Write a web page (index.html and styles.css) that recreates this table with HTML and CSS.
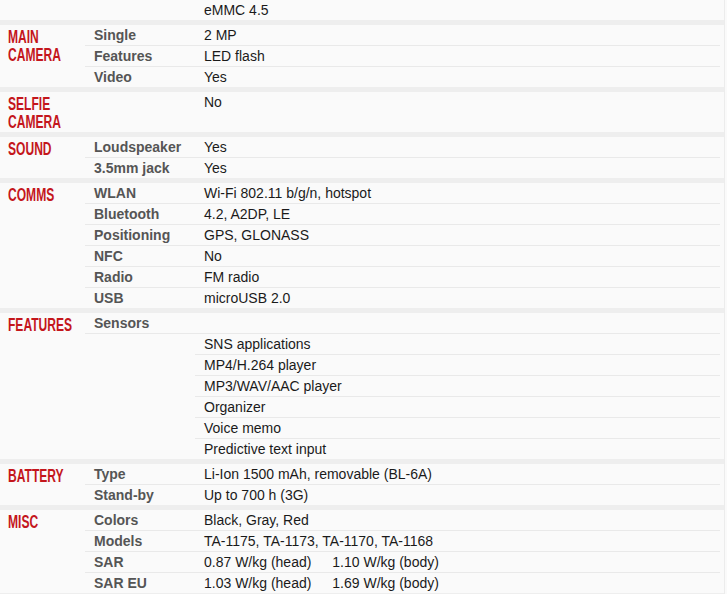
FILE: index.html
```html
<!DOCTYPE html>
<html>
<head>
<meta charset="utf-8">
<link rel="stylesheet" href="styles.css">
</head>
<body>
<div class="page">
  <div class="section">
    <div class="title"></div>
    <div class="rows">
      <div class="row"><div class="name blank"></div><div class="val">eMMC 4.5</div></div>
    </div>
  </div>

  <div class="section">
    <div class="title"><span>MAIN<br>CAMERA</span></div>
    <div class="rows">
      <div class="row"><div class="name">Single</div><div class="val">2 MP</div></div>
      <div class="row"><div class="name">Features</div><div class="val">LED flash</div></div>
      <div class="row"><div class="name">Video</div><div class="val">Yes</div></div>
    </div>
  </div>

  <div class="section">
    <div class="title"><span>SELFIE<br>CAMERA</span></div>
    <div class="rows">
      <div class="row"><div class="name blank"></div><div class="val">No</div></div>
    </div>
  </div>

  <div class="section">
    <div class="title"><span>SOUND</span></div>
    <div class="rows">
      <div class="row"><div class="name">Loudspeaker</div><div class="val">Yes</div></div>
      <div class="row"><div class="name">3.5mm jack</div><div class="val">Yes</div></div>
    </div>
  </div>

  <div class="section">
    <div class="title"><span>COMMS</span></div>
    <div class="rows">
      <div class="row"><div class="name">WLAN</div><div class="val">Wi-Fi 802.11 b/g/n, hotspot</div></div>
      <div class="row"><div class="name">Bluetooth</div><div class="val">4.2, A2DP, LE</div></div>
      <div class="row"><div class="name">Positioning</div><div class="val">GPS, GLONASS</div></div>
      <div class="row"><div class="name">NFC</div><div class="val">No</div></div>
      <div class="row"><div class="name">Radio</div><div class="val">FM radio</div></div>
      <div class="row"><div class="name">USB</div><div class="val">microUSB 2.0</div></div>
    </div>
  </div>

  <div class="section">
    <div class="title"><span>FEATURES</span></div>
    <div class="rows">
      <div class="row"><div class="name">Sensors</div><div class="val"></div></div>
      <div class="row"><div class="name blank"></div><div class="val">SNS applications</div></div>
      <div class="row"><div class="name blank"></div><div class="val">MP4/H.264 player</div></div>
      <div class="row"><div class="name blank"></div><div class="val">MP3/WAV/AAC player</div></div>
      <div class="row"><div class="name blank"></div><div class="val">Organizer</div></div>
      <div class="row"><div class="name blank"></div><div class="val">Voice memo</div></div>
      <div class="row"><div class="name blank"></div><div class="val">Predictive text input</div></div>
    </div>
  </div>

  <div class="section">
    <div class="title"><span>BATTERY</span></div>
    <div class="rows">
      <div class="row"><div class="name">Type</div><div class="val">Li-Ion 1500 mAh, removable (BL-6A)</div></div>
      <div class="row"><div class="name">Stand-by</div><div class="val">Up to 700 h (3G)</div></div>
    </div>
  </div>

  <div class="section">
    <div class="title"><span>MISC</span></div>
    <div class="rows">
      <div class="row"><div class="name">Colors</div><div class="val">Black, Gray, Red</div></div>
      <div class="row"><div class="name">Models</div><div class="val">TA-1175, TA-1173, TA-1170, TA-1168</div></div>
      <div class="row"><div class="name">SAR</div><div class="val">0.87 W/kg (head) <span class="gap"></span>1.10 W/kg (body)</div></div>
      <div class="row"><div class="name">SAR EU</div><div class="val">1.03 W/kg (head) <span class="gap"></span>1.69 W/kg (body)</div></div>
    </div>
  </div>
</div>
</body>
</html>
```

FILE: styles.css
```css
html, body {
  margin: 0;
  padding: 0;
  background: #fafafa;
}

.page {
  width: 724px;
  border-right: 1px solid #ececec;
  font-family: "Liberation Sans", Arial, sans-serif;
  font-size: 14px;
}

.section {
  display: flex;
  border-bottom: 5px solid #eeeeee;
}

.title {
  width: 77px;
  flex: 0 0 77px;
  padding: 3px 0 1px 8px;
  white-space: nowrap;
}

.title span {
  display: inline-block;
  font-size: 18px;
  line-height: 18px;
  font-weight: bold;
  color: #c4161c;
  transform: scaleX(0.67);
  transform-origin: left top;
}

.rows {
  flex: 1;
  margin-right: 4px;
}

.row {
  display: flex;
  line-height: 20px;
  height: 21px;
}

.row:last-child {
  height: 20px;
}

.name {
  flex: 0 0 101px;
  padding-left: 9px;
  font-weight: bold;
  color: #555555;
  border-bottom: 1px solid #e9e9e9;
}

.name.blank {
  border-bottom-color: transparent;
}

.val {
  flex: 1;
  padding-left: 9px;
  color: #1a1a1a;
  border-bottom: 1px solid #e9e9e9;
  white-space: nowrap;
}

.row:last-child .name,
.row:last-child .val {
  border-bottom: none;
}

.gap {
  display: inline-block;
  width: 17px;
}
```
